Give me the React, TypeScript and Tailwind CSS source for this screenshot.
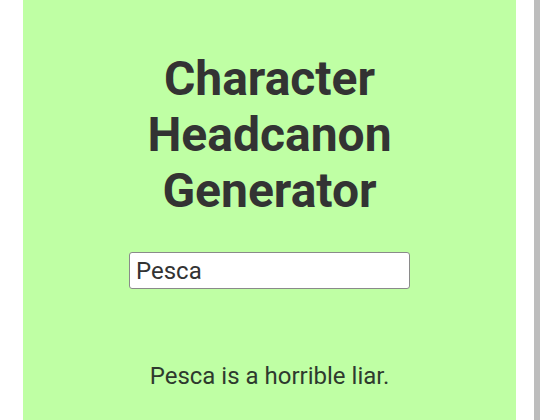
import { useState } from 'react';

const App = () => {
  const [name, setName] = useState('Pesca');

  return (
    <div className="flex h-[420px] w-[540px] overflow-hidden bg-white" style={{ fontFamily: 'Roboto, "Noto Sans", sans-serif' }}>
      <div className="w-[23px] shrink-0" />
      <main className="flex w-[493px] shrink-0 flex-col items-center bg-[#bfffa4] text-[#333333]">
        <h1 className="mt-[51px] w-[260px] text-center text-[48px] font-bold leading-[56px]">
          Character Headcanon Generator
        </h1>
        <input
          value={name}
          onChange={(e) => setName(e.target.value)}
          className="mt-[33px] h-[37px] w-[281px] rounded-[3px] border border-[#8a8a8a] bg-white px-[6px] text-[24px] text-[#333333] outline-none"
        />
        <p className="mt-[72px] text-[24px] leading-[30px] text-[#2e3a2e]">{name} is a horrible liar.</p>
      </main>
      <div className="w-[18px] shrink-0" />
      <div className="w-[6px] shrink-0 bg-[#bdbdbd]" />
    </div>
  );
};

export default App;
